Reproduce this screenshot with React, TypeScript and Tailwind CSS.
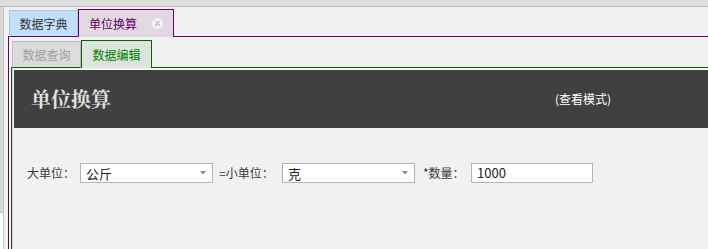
import React from 'react';

function CloseDot() {
  return (
    <svg width="11" height="11" viewBox="0 0 11 11" className="shrink-0">
      <circle cx="5.5" cy="5.5" r="5.5" fill="#f2f2f2" />
      <path d="M3.6 3.6l3.8 3.8M7.4 3.6l-3.8 3.8" stroke="#c4c4c4" strokeWidth="1.4" strokeLinecap="round" />
    </svg>
  );
}

function Select({ value, width }: { value: string; width: string }) {
  return (
    <div className={`flex h-[20px] ${width} items-center justify-between border border-[#b4b4b4] bg-white pl-[5px] pr-[6px] text-[13px] text-[#222]`}>
      <span className="leading-none">{value}</span>
      <svg width="6" height="4" viewBox="0 0 6 4">
        <path d="M0 0h6L3 3.5z" fill="#8c8c8c" />
      </svg>
    </div>
  );
}

export default function App() {
  return (
    <div className="h-[249px] w-[708px] overflow-hidden bg-[#f1f1f1] font-['Noto_Sans_CJK_SC','Microsoft_YaHei',sans-serif] text-[12px] text-[#3a3a3a]">
      {/* window top strip */}
      <div className="h-[7px] border-b border-[#bdbdbd] bg-[#dedede]" />

      <div className="flex h-[242px]">
        {/* left gutter */}
        <div className="flex w-[4px] shrink-0 flex-col border-r border-[#c6c6c6]">
          <div className="flex-1 bg-[#d8d8d8]" />
          <div className="h-[37px] border-t border-[#c4c4c4] bg-white" />
        </div>

        <div className="flex flex-1 flex-col pl-[4px] pt-[2px]">
          {/* outer tabs */}
          <div className="flex h-[28px] shrink-0 items-end">
            <div className="h-px w-px bg-[#660066]" />
            <div className="flex h-[27px] w-[69px] items-center justify-center border-x border-t border-[#a9c6e4] border-b border-b-[#660066] bg-[#c2dffd] text-[#333]">
              数据字典
            </div>
            <div className="flex h-[28px] w-[96px] items-center justify-between border-x border-t border-[#660066] bg-[#e1d8e1] pl-[10px] pr-[10px] text-[#660066]">
              <span>单位换算</span>
              <CloseDot />
            </div>
            <div className="h-px flex-1 bg-[#660066]" />
          </div>

          {/* purple panel */}
          <div className="flex flex-1 flex-col border-l border-[#660066] pl-[2px] pt-[3px]">
            {/* inner tabs */}
            <div className="flex h-[28px] shrink-0 items-end">
              <div className="h-px w-px bg-[#006600]" />
              <div className="flex h-[27px] w-[69px] items-center justify-center border-x border-t border-[#bcbcbc] border-b border-b-[#006600] bg-[#dcdcdc] text-[#a0a0a0]">
                数据查询
              </div>
              <div className="flex h-[28px] w-[71px] items-center justify-center border-x border-t border-[#006600] bg-[#dbe5db] text-[#008000]">
                数据编辑
              </div>
              <div className="h-px flex-1 bg-[#006600]" />
            </div>

            {/* green panel */}
            <div className="flex-1 border-l border-[#006600]">
              <div className="h-full border-l border-[#d2d2d2] bg-[#f1f1f1] pl-px pt-px">
                <div className="h-full border-t border-white">
                  {/* header */}
                  <div className="flex h-[58px] items-center bg-[#404040] pl-[17px]">
                    <div className="w-[524px] font-['Noto_Serif_CJK_SC','Liberation_Serif',serif] text-[20px] font-bold text-[#e2e2e2]">
                      单位换算
                    </div>
                    <div className="text-[12px] text-white">(查看模式)</div>
                  </div>

                  {/* form row */}
                  <div className="mt-[35px] flex h-[20px] items-center pl-[13px]">
                    <span className="w-[53px]">大单位：</span>
                    <Select value="公斤" width="w-[133px]" />
                    <span className="ml-[6px] w-[63px]">=小单位：</span>
                    <Select value="克" width="w-[133px]" />
                    <span className="ml-[8px] w-[48px]">*数量：</span>
                    <div className="flex h-[20px] w-[122px] items-center border border-[#b4b4b4] bg-white pl-[5px] text-[13px] text-[#222]">
                      1000
                    </div>
                  </div>
                </div>
              </div>
            </div>
          </div>
        </div>
      </div>
    </div>
  );
}
